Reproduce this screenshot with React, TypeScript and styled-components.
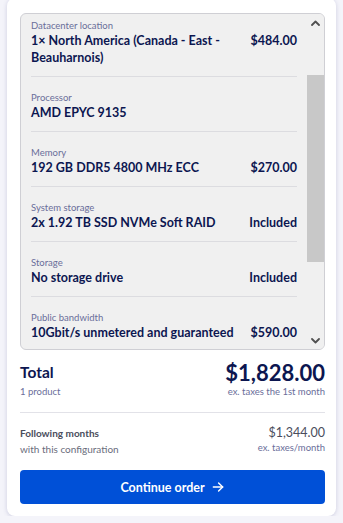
import { useLayoutEffect, useRef } from 'react';
import styled, { createGlobalStyle } from 'styled-components';

const Global = createGlobalStyle`
  html, body {
    margin: 0;
    padding: 0;
    background: #f4f4fa;
    font-family: Lato, "Open Sans", sans-serif;
  }
  * { box-sizing: border-box; }
`;

const Card = styled.div`
  margin: -2px 7px 0;
  background: #fff;
  border-radius: 8px;
  box-shadow: 0 1px 4px rgba(90, 90, 150, 0.25);
  padding: 15px 11px 12px 13px;
`;

const Details = styled.div`
  display: flex;
  height: 337px;
  background: #f0f0f0;
  border: 1px solid #cfcfd4;
  border-radius: 6px;
  overflow: hidden;
`;

const Viewport = styled.div`
  flex: 1;
  overflow: hidden;
  padding: 0 10px;
`;

const ScrollBar = styled.div`
  width: 17px;
  display: flex;
  flex-direction: column;
  background: #f0f0f0;
`;

const ArrowBtn = styled.div`
  height: 17px;
  display: flex;
  align-items: center;
  justify-content: center;
  color: #505050;
`;

const Track = styled.div`
  flex: 1;
`;

const Thumb = styled.div`
  margin-top: 44px;
  height: 187px;
  background: #c8c8c8;
`;

const Row = styled.div`
  display: flex;
  justify-content: space-between;
  align-items: flex-start;
  gap: 8px;
  padding: 14px 0 10px;
  border-bottom: 1px solid #dcdce0;

  &:last-child {
    border-bottom: none;
  }
`;

const Info = styled.div`
  flex: 1;
  min-width: 0;
`;

const Label = styled.div`
  font-size: 9.5px;
  line-height: 13px;
  color: #6a6e9a;
`;

const Value = styled.div`
  font-size: 12.5px;
  line-height: 17px;
  font-weight: 700;
  color: #0c1650;
`;

const Price = styled.div`
  margin-top: 13px;
  font-size: 12.5px;
  line-height: 17px;
  font-weight: 700;
  color: #0c1650;
  white-space: nowrap;
`;

const TotalGrid = styled.div`
  display: grid;
  grid-template-columns: 1fr auto;
  align-items: start;
  margin-top: 11px;
  padding-bottom: 13px;
  border-bottom: 1px solid #e2e2e8;
`;

const TotalTitle = styled.div`
  margin-top: 1px;
  font-size: 15.5px;
  line-height: 20px;
  font-weight: 700;
  color: #0c1650;
`;

const BigPrice = styled.div`
  font-size: 22px;
  line-height: 24px;
  font-weight: 700;
  color: #0c1650;
  text-align: right;
`;

const Small = styled.div<{ $right?: boolean }>`
  font-size: 9.5px;
  line-height: 14px;
  color: #6a6e9a;
  text-align: ${(p) => (p.$right ? 'right' : 'left')};
`;

const Following = styled.div`
  display: grid;
  grid-template-columns: 1fr auto;
  margin-top: 12px;
`;

const FollowLabel = styled.div<{ $strong?: boolean }>`
  font-size: 10px;
  line-height: 16px;
  font-weight: ${(p) => (p.$strong ? 700 : 400)};
  color: ${(p) => (p.$strong ? '#4a4d5c' : '#6a6d7c')};
`;

const FollowPrice = styled.div`
  font-size: 12.5px;
  line-height: 16px;
  color: #4a4d5c;
  text-align: right;
`;

const Button = styled.button`
  margin-top: 13px;
  width: 100%;
  height: 34px;
  border: none;
  border-radius: 4px;
  background: #0050d7;
  color: #fff;
  font-family: inherit;
  font-size: 12.5px;
  font-weight: 700;
  display: flex;
  align-items: center;
  justify-content: center;
  gap: 6px;
  cursor: pointer;
`;

type Item = { label: string; value: string; price?: string };

const items: Item[] = [
  { label: 'Datacenter location', value: '1× North America (Canada - East - Beauharnois)', price: '$484.00' },
  { label: 'Processor', value: 'AMD EPYC 9135' },
  { label: 'Memory', value: '192 GB DDR5 4800 MHz ECC', price: '$270.00' },
  { label: 'System storage', value: '2x 1.92 TB SSD NVMe Soft RAID', price: 'Included' },
  { label: 'Storage', value: 'No storage drive', price: 'Included' },
  { label: 'Public bandwidth', value: '10Gbit/s unmetered and guaranteed', price: '$590.00' },
];

const Chevron = ({ up }: { up?: boolean }) => (
  <svg width="9" height="6" viewBox="0 0 9 6" fill="none" stroke="currentColor" strokeWidth="1.8" strokeLinecap="round" strokeLinejoin="round">
    <path d={up ? 'M1 5 L4.5 1.5 L8 5' : 'M1 1 L4.5 4.5 L8 1'} />
  </svg>
);

export default function App() {
  const boxRef = useRef<HTMLDivElement>(null);

  // the list is shown already scrolled a little
  useLayoutEffect(() => {
    const scroll = () => {
      if (boxRef.current) boxRef.current.scrollTop = 9;
    };
    scroll();
    const t = setTimeout(scroll, 50);
    return () => clearTimeout(t);
  }, []);

  return (
    <>
      <Global />
      <Card>
        <Details>
          <Viewport ref={boxRef}>
            {items.map((it) => (
              <Row key={it.label}>
                <Info>
                  <Label>{it.label}</Label>
                  <Value>{it.value}</Value>
                </Info>
                {it.price ? <Price>{it.price}</Price> : null}
              </Row>
            ))}
          </Viewport>
          <ScrollBar>
            <ArrowBtn><Chevron up /></ArrowBtn>
            <Track><Thumb /></Track>
            <ArrowBtn><Chevron /></ArrowBtn>
          </ScrollBar>
        </Details>

        <TotalGrid>
          <TotalTitle>Total</TotalTitle>
          <BigPrice>$1,828.00</BigPrice>
          <Small>1 product</Small>
          <Small $right>ex. taxes the 1st month</Small>
        </TotalGrid>

        <Following>
          <FollowLabel $strong>Following months</FollowLabel>
          <FollowPrice>$1,344.00</FollowPrice>
          <FollowLabel>with this configuration</FollowLabel>
          <Small $right>ex. taxes/month</Small>
        </Following>

        <Button>
          Continue order
          <svg width="14" height="14" viewBox="0 0 24 24" fill="none" stroke="currentColor" strokeWidth="2.4" strokeLinecap="round" strokeLinejoin="round">
            <path d="M4 12h16" />
            <path d="M13 5l7 7-7 7" />
          </svg>
        </Button>
      </Card>
    </>
  );
}
